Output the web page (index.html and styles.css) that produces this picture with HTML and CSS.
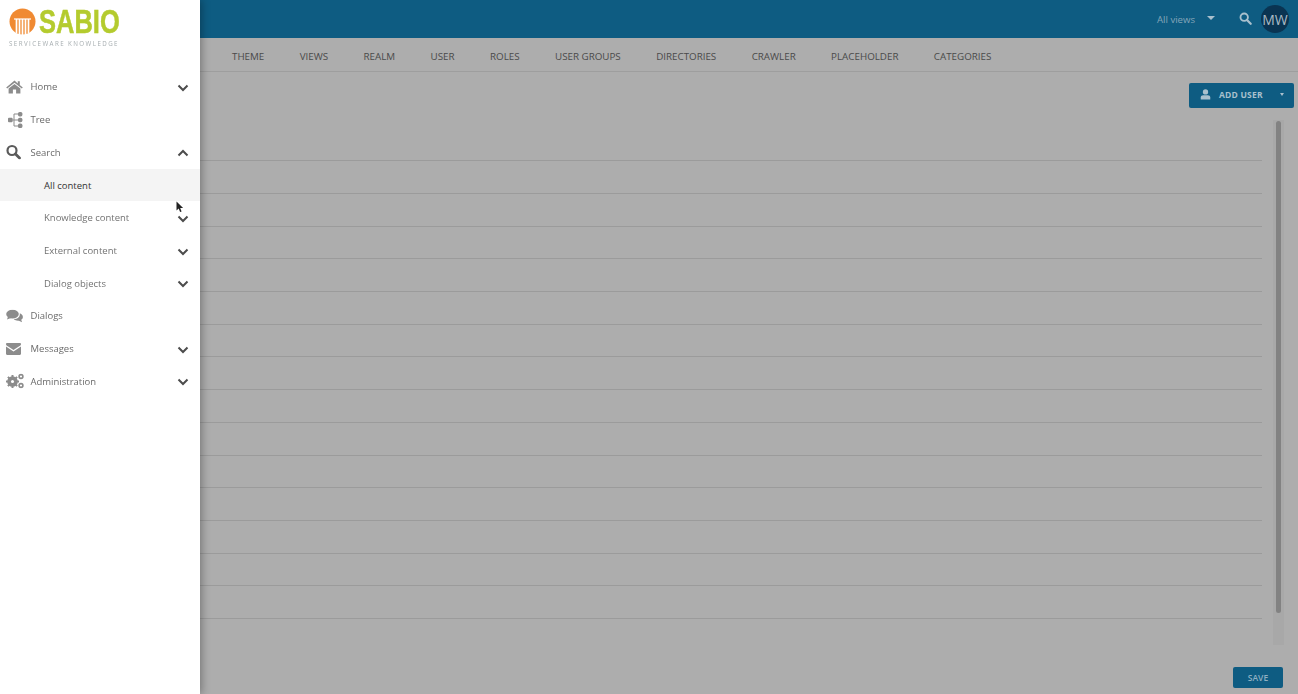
FILE: index.html
```html
<!DOCTYPE html>
<html lang="en">
<head>
    <meta charset="UTF-8">
    <title>Sabio Administration</title>
    <link rel="stylesheet" href="styles.css">
</head>
<body>
    <!-- Page behind the drawer -->
    <div class="page">
        <header class="topbar">
            <span class="views-label">All views</span>
            <span class="views-caret"></span>
            <svg class="top-search" viewBox="0 0 14 14" width="13" height="13">
                <circle cx="5.6" cy="5.6" r="4" fill="none" stroke="currentColor" stroke-width="2"/>
                <path d="M8.6 8.6l4 4" stroke="currentColor" stroke-width="2.4" stroke-linecap="round"/>
            </svg>
            <div class="avatar">MW</div>
        </header>

        <nav class="tabs">
            <a class="tab">THEME</a>
            <a class="tab">VIEWS</a>
            <a class="tab">REALM</a>
            <a class="tab">USER</a>
            <a class="tab">ROLES</a>
            <a class="tab">USER GROUPS</a>
            <a class="tab">DIRECTORIES</a>
            <a class="tab">CRAWLER</a>
            <a class="tab">PLACEHOLDER</a>
            <a class="tab">CATEGORIES</a>
        </nav>

        <main class="content">
            <div class="toolbar">
                <button class="add-user">
                    <svg viewBox="0 0 12 12" width="11" height="11">
                        <circle cx="6" cy="3.2" r="2.9" fill="currentColor"/>
                        <path d="M.8 11.5V9.2C.8 7.6 2 6.7 3.4 6.7h5.2c1.4 0 2.6.9 2.6 2.5v2.3z" fill="currentColor"/>
                    </svg>
                    <span class="add-user-label">ADD USER</span>
                    <span class="add-user-caret"></span>
                </button>
            </div>
            <div class="list-wrap">
                <div class="user-list">
                    <div class="user-row"></div>
                    <div class="user-row"></div>
                    <div class="user-row"></div>
                    <div class="user-row"></div>
                    <div class="user-row"></div>
                    <div class="user-row"></div>
                    <div class="user-row"></div>
                    <div class="user-row"></div>
                    <div class="user-row"></div>
                    <div class="user-row"></div>
                    <div class="user-row"></div>
                    <div class="user-row"></div>
                    <div class="user-row"></div>
                    <div class="user-row"></div>
                    <div class="user-row"></div>
                </div>
                <div class="scroll-track"><div class="scroll-thumb"></div></div>
            </div>
            <div class="footer">
                <button class="save">SAVE</button>
            </div>
        </main>
    </div>

    <!-- Drawer -->
    <aside class="drawer">
        <div class="logo">
            <svg class="logo-mark" viewBox="0 0 28 28" width="28" height="28">
                <circle cx="13.5" cy="13.5" r="13" fill="#f08a32"/>
                <path d="M5 11h17" stroke="#fff" stroke-width="1.2"/>
                <path d="M7.5 11v14M10.5 11v16M13.5 11v16M16.5 11v16M19.5 11v14" stroke="#fff" stroke-width="1.7"/>
            </svg>
            <svg class="logo-word" viewBox="0 0 81 28" width="81" height="28">
                <text x="0" y="25" transform="scale(0.75 1)">SABIO</text>
            </svg>
            <div class="logo-sub">SERVICEWARE KNOWLEDGE</div>
        </div>

        <div class="nav-item">
            <svg class="nav-icon" viewBox="0 0 17 14" width="17" height="14">
                <path d="M8.5.6L.2 7.4l1 1.2L8.5 2.7l7.3 5.9 1-1.2-3-2.5V1.2h-2v2.3z" fill="currentColor"/>
                <path d="M8.5 3.9L2.6 8.6v5h4.3V9.6h3.2v4h4.3v-5z" fill="currentColor"/>
            </svg>
            <span>Home</span>
            <svg class="chevron" viewBox="0 0 12 8" width="12" height="8"><path d="M1.5 1.5L6 6l4.5-4.5"/></svg>
        </div>
        <div class="nav-item">
            <svg class="nav-icon" viewBox="0 0 17 17" width="17" height="17">
                <path d="M4 8.5h4M8 2.5h5M8 8.5h5M8 14.5h5M8 2.5v12" stroke="currentColor" fill="none"/>
                <rect x="2" y="6.2" width="4.6" height="4.6" rx="1" fill="currentColor"/>
                <rect x="12" y="0.5" width="4.4" height="4.4" rx="1.6" fill="currentColor"/>
                <rect x="12" y="6.3" width="4.4" height="4.4" rx="1.6" fill="currentColor"/>
                <rect x="12" y="12.1" width="4.4" height="4.4" rx="1.6" fill="currentColor"/>
            </svg>
            <span>Tree</span>
        </div>
        <div class="nav-item">
            <svg class="nav-icon icon-dark" viewBox="0 0 15 15" width="15" height="15">
                <circle cx="6" cy="6" r="4.5" fill="none" stroke="currentColor" stroke-width="2.2"/>
                <path d="M9.5 9.5l4 4" stroke="currentColor" stroke-width="2.8" stroke-linecap="round"/>
            </svg>
            <span>Search</span>
            <svg class="chevron" viewBox="0 0 12 8" width="12" height="8"><path d="M1.5 6.5L6 2l4.5 4.5"/></svg>
        </div>
        <div class="nav-item sub active"><span>All content</span></div>
        <div class="nav-item sub">
            <span>Knowledge content</span>
            <svg class="chevron" viewBox="0 0 12 8" width="12" height="8"><path d="M1.5 1.5L6 6l4.5-4.5"/></svg>
        </div>
        <div class="nav-item sub">
            <span>External content</span>
            <svg class="chevron" viewBox="0 0 12 8" width="12" height="8"><path d="M1.5 1.5L6 6l4.5-4.5"/></svg>
        </div>
        <div class="nav-item sub">
            <span>Dialog objects</span>
            <svg class="chevron" viewBox="0 0 12 8" width="12" height="8"><path d="M1.5 1.5L6 6l4.5-4.5"/></svg>
        </div>
        <div class="nav-item">
            <svg class="nav-icon" viewBox="0 0 17 13" width="17" height="13">
                <ellipse cx="6.5" cy="4.6" rx="6.3" ry="4.4" fill="currentColor"/>
                <path d="M2 7l-1 3 4-1.6z" fill="currentColor"/>
                <path d="M13.8 3.8c1.9.7 3.1 2 3.1 3.6 0 1.2-.7 2.2-1.7 2.9l.9 2.5-3.2-1.6c-2 .2-4-.3-5.2-1.6 3.6.1 6.7-2.1 6.1-5.8z" fill="currentColor"/>
            </svg>
            <span>Dialogs</span>
        </div>
        <div class="nav-item">
            <svg class="nav-icon" viewBox="0 0 15 12" width="15" height="12">
                <path d="M1.2 0h12.6c.7 0 1.2.5 1.2 1.2 0 .5-.3.9-.7 1.2L7.5 7 .7 2.4C.3 2.1 0 1.7 0 1.2 0 .5.5 0 1.2 0z" fill="currentColor"/>
                <path d="M0 3.6l7.5 5 7.5-5v7.2c0 .7-.5 1.2-1.2 1.2H1.2C.5 12 0 11.5 0 10.8z" fill="currentColor"/>
            </svg>
            <span>Messages</span>
            <svg class="chevron" viewBox="0 0 12 8" width="12" height="8"><path d="M1.5 1.5L6 6l4.5-4.5"/></svg>
        </div>
        <div class="nav-item">
            <svg class="nav-icon" viewBox="0 0 18 15" width="18" height="15">
                <circle cx="6.5" cy="8" r="3.9" fill="none" stroke="currentColor" stroke-width="2.8"/>
                <path d="M6.5 1.5v13M0 8h13M1.9 3.4l9.2 9.2M11.1 3.4l-9.2 9.2" stroke="currentColor" stroke-width="2"/>
                <circle cx="6.5" cy="8" r="1.5" fill="#fff"/>
                <circle cx="15" cy="3" r="1.9" fill="none" stroke="currentColor" stroke-width="1.6"/>
                <circle cx="15" cy="12" r="1.9" fill="none" stroke="currentColor" stroke-width="1.6"/>
            </svg>
            <span>Administration</span>
            <svg class="chevron" viewBox="0 0 12 8" width="12" height="8"><path d="M1.5 1.5L6 6l4.5-4.5"/></svg>
        </div>
    </aside>

    <!-- Mouse pointer in the capture -->
    <svg class="pointer" viewBox="0 0 8 12" width="8" height="12">
        <path d="M.5.5v9l2.2-1.9 1.4 3.4 1.5-.6-1.4-3.3h2.9z" fill="#222"/>
    </svg>
</body>
</html>
```

FILE: styles.css
```css
/* Base */
html, body {
    height: 100%;
}

body {
    margin: 0;
    overflow: hidden;
    font-family: "Open Sans", sans-serif;
    background-color: #adadad;
    color: #555;
}

button {
    font-family: inherit;
    border: none;
}

/* Page behind the drawer */
.page {
    display: flex;
    flex-direction: column;
    height: 100vh;
}

/* Top bar */
.topbar {
    display: flex;
    align-items: center;
    justify-content: flex-end;
    flex: 0 0 38px;
    padding-right: 9px;
    background-color: #0e5c82;
    color: #a9c0cd;
}

.views-label {
    font-size: 9.6px;
    color: #83a5b8;
}

.views-caret {
    width: 0;
    height: 0;
    margin: 0 24px 2px 12px;
    border-left: 4px solid transparent;
    border-right: 4px solid transparent;
    border-top: 4px solid #a9c0cd;
}

.top-search {
    margin: 0 9px 2px 0;
}

.avatar {
    display: flex;
    align-items: center;
    justify-content: center;
    width: 28px;
    height: 28px;
    border-radius: 50%;
    background-color: #0a3452;
    color: #a9b9c4;
    font-size: 14px;
}

/* Tabs */
.tabs {
    display: flex;
    align-items: center;
    gap: 35.4px;
    flex: 0 0 34px;
    padding: 4px 0 0 232px;
    box-sizing: border-box;
    border-bottom: 1px solid #9e9e9e;
}

.tab {
    font-size: 9.8px;
    color: #4a4a4a;
}

/* Main content */
.content {
    display: flex;
    flex-direction: column;
    flex: 1;
    min-height: 0;
}

.toolbar {
    display: flex;
    justify-content: flex-end;
    padding: 11px 4px 0 0;
}

.add-user {
    display: flex;
    align-items: center;
    width: 105px;
    height: 25px;
    padding: 0 0 2px 11px;
    border-radius: 2px;
    background-color: #0e5c82;
    color: #a9c0cd;
}

.add-user-label {
    margin-left: 8px;
    font-size: 8.5px;
    font-weight: 700;
    letter-spacing: 0.2px;
}

.add-user-caret {
    width: 0;
    height: 0;
    margin-left: 17px;
    border-left: 2.5px solid transparent;
    border-right: 2.5px solid transparent;
    border-top: 3px solid #a9c0cd;
}

/* User list with its scrollbar */
.list-wrap {
    display: flex;
    align-items: flex-start;
    padding: 12px 14px 0 0;
}

.user-list {
    flex: 1;
    padding-top: 8.4px;
}

.user-row {
    height: 31.73px;
    border-bottom: 1px solid #9b9b9b;
}

.scroll-track {
    flex: 0 0 11px;
    height: 525px;
    margin-left: 11px;
    padding: 1px 3px 0;
    box-sizing: border-box;
    background-color: #a8a8a8;
}

.scroll-thumb {
    height: 492px;
    border-radius: 3px;
    background-color: #828282;
}

.footer {
    display: flex;
    justify-content: flex-end;
    margin-top: auto;
    padding: 0 15px 6px 0;
}

.save {
    width: 50px;
    height: 21px;
    padding: 0;
    border-radius: 2px;
    background-color: #0e5c82;
    color: #8fb0c2;
    font-size: 8.5px;
    font-weight: 600;
}

/* Drawer */
.drawer {
    position: fixed;
    top: 0;
    left: 0;
    bottom: 0;
    width: 200px;
    background-color: #fff;
    box-shadow: 2px 0 8px rgba(0, 0, 0, 0.3);
}

.logo {
    display: flex;
    flex-wrap: wrap;
    align-content: flex-start;
    align-items: flex-start;
    height: 70.6px;
    box-sizing: border-box;
    padding: 8px 0 0 9px;
}

.logo-mark {
    flex: none;
}

.logo-word {
    flex: none;
    margin-left: 2px;
    overflow: visible;
}

.logo-word text {
    font-family: "Liberation Sans", sans-serif;
    font-size: 34px;
    font-weight: 700;
    fill: #b4cb2e;
    stroke: #b4cb2e;
    stroke-width: 0.5;
}

.logo-sub {
    margin-top: 3px;
    font-size: 6.2px;
    letter-spacing: 1.43px;
    color: #a6adb0;
    white-space: nowrap;
}

.nav-item {
    display: flex;
    align-items: center;
    height: 32.73px;
    padding: 0 11px 0 30.5px;
    position: relative;
    box-sizing: border-box;
    font-size: 9.5px;
    color: #6a6a6a;
}

.nav-item.sub {
    padding-left: 44px;
    color: #727272;
}

.nav-item.active {
    background-color: #f4f4f4;
    color: #333;
}

.nav-icon {
    position: absolute;
    left: 6px;
    top: 50%;
    transform: translateY(-50%);
    color: #8c8c8c;
}

.icon-dark {
    color: #5a5a5a;
}

.chevron {
    margin: 2px 0 0 auto;
    fill: none;
    stroke: #4c4c4c;
    stroke-width: 2;
}

/* Mouse pointer */
.pointer {
    position: fixed;
    left: 176px;
    top: 201px;
}
```
